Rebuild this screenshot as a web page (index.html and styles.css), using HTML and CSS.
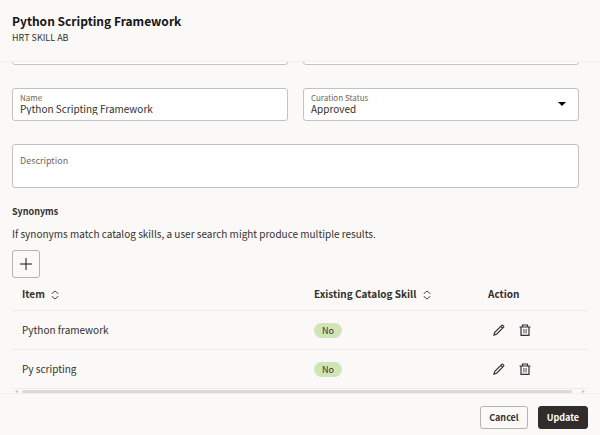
FILE: index.html
```html
<!DOCTYPE html>
<html lang="en">

<head>
    <meta charset="UTF-8">
    <meta name="viewport" content="width=device-width, initial-scale=1.0">
    <title>Python Scripting Framework</title>
    <link rel="stylesheet" href="styles.css">
</head>

<body>
    <header class="header">
        <h1 class="title">Python Scripting Framework</h1>
        <p class="subtitle">HRT SKILL AB</p>
    </header>

    <main class="content">
        <form class="form" id="skillForm">
            <div class="field"><input type="text" aria-label="Code"></div>
            <div class="field"><input type="text" aria-label="Type"></div>
            <div class="field">
                <label for="name">Name</label>
                <input type="text" id="name" value="Python Scripting Framework">
            </div>
            <div class="field">
                <label for="status">Curation Status</label>
                <select id="status">
                    <option>Approved</option>
                </select>
                <svg class="arrow" viewBox="0 0 8 4"><path d="M0 0h8L4 4z"/></svg>
            </div>
            <div class="field wide">
                <label for="description">Description</label>
                <textarea id="description" rows="1"></textarea>
            </div>
        </form>

        <h2 class="section-title">Synonyms</h2>
        <p class="hint">If synonyms match catalog skills, a user search might produce multiple results.</p>
        <button type="button" class="add" aria-label="Add">
            <svg viewBox="0 0 14 14"><path d="M7 1v12M1 7h12"/></svg>
        </button>

        <table class="table">
            <thead>
                <tr>
                    <th>Item <svg class="sort" viewBox="0 0 8 10"><path d="M1 4V3.500L4 1l3 2.500V4M1 6v.5L4 9l3-2.500V6"/></svg></th>
                    <th class="col-skill">Existing Catalog Skill <svg class="sort" viewBox="0 0 8 10"><path d="M1 4V3.500L4 1l3 2.500V4M1 6v.5L4 9l3-2.500V6"/></svg></th>
                    <th class="col-action">Action</th>
                </tr>
            </thead>
            <tbody>
                <tr>
                    <td>Python framework</td>
                    <td><span class="badge">No</span></td>
                    <td>
                        <div class="actions">
                            <button type="button" class="icon" aria-label="Edit"><svg viewBox="0 0 12 12"><path d="M1 11l.8-2.600L8.800 1.400a.8.8 0 0 1 1.100 0l.7.7a.8.8 0 0 1 0 1.100L3.600 10.200zM7.800 2.400l1.800 1.800"/></svg></button>
                            <button type="button" class="icon" aria-label="Delete"><svg viewBox="0 0 12 12"><path d="M.5 3h11M3.500 3V1h5v2M2 3v8.400h8V3"/><path class="bars" d="M4.900 5v4.500M7.100 5v4.500"/></svg></button>
                        </div>
                    </td>
                </tr>
                <tr>
                    <td>Py scripting</td>
                    <td><span class="badge">No</span></td>
                    <td>
                        <div class="actions">
                            <button type="button" class="icon" aria-label="Edit"><svg viewBox="0 0 12 12"><path d="M1 11l.8-2.600L8.800 1.400a.8.8 0 0 1 1.100 0l.7.7a.8.8 0 0 1 0 1.100L3.600 10.200zM7.800 2.400l1.800 1.800"/></svg></button>
                            <button type="button" class="icon" aria-label="Delete"><svg viewBox="0 0 12 12"><path d="M.5 3h11M3.500 3V1h5v2M2 3v8.400h8V3"/><path class="bars" d="M4.900 5v4.500M7.100 5v4.500"/></svg></button>
                        </div>
                    </td>
                </tr>
            </tbody>
        </table>
        <div class="scrollbar">
            <svg viewBox="0 0 3 3"><path d="M3 0v3L0 1.500z"/></svg>
            <div class="thumb"></div>
            <svg viewBox="0 0 3 3"><path d="M0 0v3l3-1.500z"/></svg>
        </div>
    </main>

    <footer class="footer">
        <button type="button" class="btn">Cancel</button>
        <button type="submit" class="btn btn-dark" form="skillForm">Update</button>
    </footer>
</body>

</html>
```

FILE: styles.css
```css
* {
    box-sizing: border-box;
}

body {
    display: flex;
    flex-direction: column;
    height: 100vh;
    margin: 0;
    background-color: #fbf9f8;
    color: #33302d;
    font-family: "Noto Sans CJK SC", "Noto Sans", sans-serif;
    font-size: 10px;
    line-height: 14px;
}

button,
input,
select,
textarea {
    color: inherit;
    font: inherit;
}

h1,
h2,
p {
    margin: 0;
}

/* header */
.header {
    padding: 11px 12px 16px;
    border-bottom: 1px solid #f1efed;
}

.title {
    color: #161513;
    font-size: 12px;
    font-weight: 700;
    line-height: 20px;
}

.subtitle {
    font-size: 9px;
}

/* scrolled to the bottom, the first row is cut by the header */
.content {
    display: flex;
    flex: 1;
    flex-direction: column;
    justify-content: flex-end;
    min-height: 0;
    padding: 0 12px;
    overflow: hidden;
}

.form {
    display: grid;
    grid-template-columns: 1fr 1fr;
    gap: 23px 15px;
    margin-right: 9px;
}

.field {
    position: relative;
    display: flex;
    flex-direction: column;
    height: 33px;
    padding: 4px 7px;
    border: 1px solid #c4c1be;
    border-radius: 3px;
    background-color: #fff;
}

.field label {
    color: #6b6764;
    font-size: 8px;
    line-height: 10px;
}

.field input,
.field select,
.field textarea {
    width: 100%;
    height: 12px;
    padding: 0;
    border: 0;
    outline: 0;
    background: none;
    line-height: 12px;
    appearance: none;
    resize: none;
}

.wide {
    grid-column: 1 / 3;
    height: 44px;
    padding: 10px 7px;
}

.wide label {
    font-size: 9px;
    line-height: 12px;
}

.arrow {
    position: absolute;
    top: 13px;
    right: 12px;
    width: 8px;
    height: 4px;
    pointer-events: none;
}

/* synonyms */
.section-title {
    margin-top: 17px;
    font-size: 9px;
    font-weight: 700;
}

.hint {
    margin-top: 8px;
}

.add {
    flex: none;
    width: 28px;
    height: 28px;
    margin-top: 9px;
    padding: 6px;
    border: 1px solid #b5b2af;
    border-radius: 3px;
    background: none;
}

.add svg {
    display: block;
    width: 14px;
    height: 14px;
    fill: none;
    stroke: #161513;
}

.table {
    width: 100%;
    border-collapse: collapse;
    table-layout: fixed;
}

.table th,
.table td {
    height: 39px;
    padding: 0 10px;
    border-bottom: 1px solid #efedeb;
    text-align: left;
}

.table th {
    height: 33px;
    font-weight: 700;
}

.col-skill {
    width: 174px;
}

.col-action {
    width: 110px;
}

.sort {
    width: 8px;
    height: 10px;
    margin-left: 4px;
    vertical-align: middle;
    fill: none;
    stroke: #4a4743;
}

.badge {
    display: inline-block;
    padding: 0 8px;
    border-radius: 8px;
    background-color: #d0e5b6;
    font-size: 9px;
    line-height: 15px;
}

.actions {
    display: flex;
    gap: 14px;
    padding-left: 5px;
}

.icon {
    width: 12px;
    height: 12px;
    padding: 0;
    border: 0;
    background: none;
}

.icon svg {
    display: block;
    fill: none;
    stroke: #33302d;
    stroke-width: 1.2;
}

.icon .bars {
    stroke: #62687c;
}

.scrollbar {
    display: flex;
    flex: none;
    align-items: center;
    gap: 4px;
    height: 4px;
    padding: 0 3px;
}

.scrollbar svg {
    width: 3px;
    height: 3px;
    fill: #c4c3c1;
}

.thumb {
    flex: 1;
    height: 3px;
    margin-right: 6px;
    border-radius: 2px;
    background-color: #dad9d6;
}

/* footer */
.footer {
    display: flex;
    justify-content: flex-end;
    gap: 10px;
    padding: 12px 12px 6px;
    border-top: 1px solid #f1efed;
}

.btn {
    height: 23px;
    padding: 0 8px;
    border: 1px solid #b5b2af;
    border-radius: 3px;
    background: none;
    font-size: 9px;
    font-weight: 700;
}

.btn-dark {
    border-color: #312d2a;
    background-color: #312d2a;
    color: #fff;
}
```
